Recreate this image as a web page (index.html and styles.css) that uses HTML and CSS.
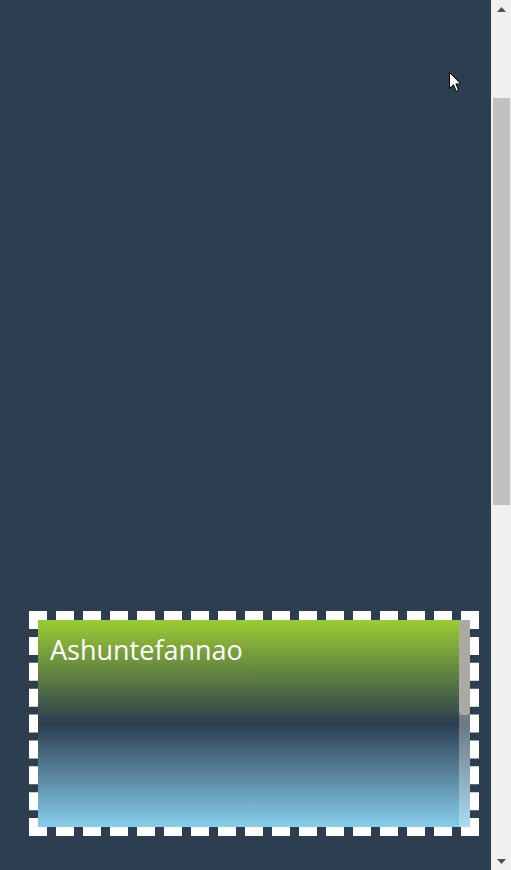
FILE: index.html
```html
<!DOCTYPE html>
<html lang="en">
<head>
<meta charset="utf-8">
<title>Ashuntefannao</title>
<link rel="stylesheet" href="styles.css">
</head>
<body>
<div class="page">
  <main class="stage">
    <div class="frame">
      <div class="panel">
        <div class="panel-body">
          <h1 class="panel-title">Ashuntefannao</h1>
        </div>
        <div class="panel-scroll"><div class="panel-thumb"></div></div>
      </div>
    </div>
    <svg class="cursor" width="13" height="21" viewBox="0 0 13 21" aria-hidden="true">
      <path d="M0.5 0.5 L0.5 16.5 L4.5 12.8 L7.2 19.2 L9.6 18.2 L6.9 11.9 L11.8 11.9 Z" fill="#fff" stroke="#000" stroke-width="1" stroke-linejoin="miter"/>
    </svg>
  </main>
  <div class="scrollbar">
    <div class="sb-btn"><span class="arrow arrow-up"></span></div>
    <div class="sb-track"><div class="sb-thumb"></div></div>
    <div class="sb-btn sb-btn-down"><span class="arrow arrow-down"></span></div>
  </div>
</div>
</body>
</html>
```
FILE: styles.css
```css
html, body {
  margin: 0;
  padding: 0;
  height: 100%;
  overflow: hidden;
}

body {
  font-family: "Open Sans", "Noto Sans", sans-serif;
  background: #2c3e50;
}

.page {
  display: flex;
  width: 511px;
  height: 870px;
}

.stage {
  position: relative;
  flex: 1;
  background: #2c3e50;
  padding: 611px 0 0 29px;
  box-sizing: border-box;
}

.frame {
  width: 450px;
  height: 225px;
  box-sizing: border-box;
  border: 9px dashed #ffffff;
}

.panel {
  height: 100%;
  display: flex;
  background: linear-gradient(to bottom, #9acd32 0%, #2c3e50 50%, #87ceeb 100%);
}

.panel-body {
  flex: 1;
  padding: 14px 12px 0 12px;
}

.panel-scroll {
  width: 11px;
  background: rgba(255, 255, 255, 0.3);
}

.panel-thumb {
  height: 95px;
  background: #a9aba2;
  border-radius: 0 0 4px 4px;
}

.panel-title {
  margin: 0;
  font-size: 27px;
  font-weight: 400;
  line-height: 1.2;
  color: #ffffff;
}

.cursor {
  position: absolute;
  left: 449px;
  top: 72px;
}

.scrollbar {
  width: 20px;
  display: flex;
  flex-direction: column;
  background: #f0f0f0;
}

.sb-btn {
  height: 17px;
  display: flex;
  justify-content: center;
  padding-top: 7px;
  box-sizing: border-box;
}

.sb-btn-down {
  padding-top: 6px;
}

.arrow {
  display: block;
  width: 9px;
  height: 5px;
  margin-left: 1px;
  background: #505050;
}

.arrow-up {
  clip-path: polygon(50% 0, 100% 100%, 0 100%);
}

.arrow-down {
  clip-path: polygon(0 0, 100% 0, 50% 100%);
}

.sb-track {
  flex: 1;
}

.sb-thumb {
  margin: 81px 1px 0 2px;
  height: 407px;
  background: #c1c1c1;
}
```
